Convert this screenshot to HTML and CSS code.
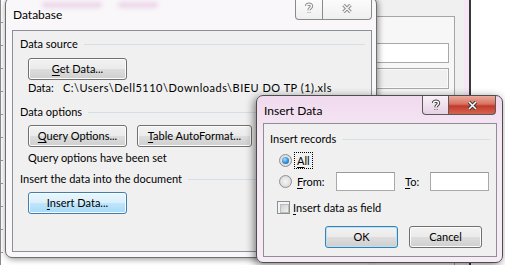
FILE: index.html
```html
<!DOCTYPE html>
<html lang="en">
<head>
    <meta charset="UTF-8">
    <title>Database - Insert Data</title>
    <link rel="stylesheet" href="styles.css">
</head>
<body>
    <div class="ruler"></div>

    <div class="backwin">
        <div class="back-panel">
            <div class="back-field"></div>
            <div class="back-field back-field-grey"></div>
        </div>
        <div class="back-gap"></div>
        <div class="back-pink"></div>
    </div>

    <div class="window db-win">
        <div class="glass glass-a"></div>
        <div class="glass glass-b"></div>
        <div class="titlebar">
            <span class="title">Database</span>
            <div class="caption">
                <span class="cap-btn cap-help">
                    <svg width="10" height="13" viewBox="0 0 10 13">
                        <path class="g-out" d="M2.5 4C2.5 1.6 7.5 1.6 7.5 4C7.5 6 5 6 5 8.2M5 10.2V11"/>
                        <path class="g-in" d="M2.5 4C2.5 1.6 7.5 1.6 7.5 4C7.5 6 5 6 5 8.2M5 10.2V11"/>
                    </svg>
                </span>
                <span class="cap-btn cap-close">
                    <svg width="12" height="11" viewBox="0 0 12 11">
                        <path class="g-out" d="M2.5 2L9.5 9M9.5 2L2.5 9"/>
                        <path class="g-in" d="M2.5 2L9.5 9M9.5 2L2.5 9"/>
                    </svg>
                </span>
            </div>
        </div>
        <div class="client db-client">
            <div class="group-head">Data source</div>
            <button class="btn btn-wide btn-first"><u>G</u>et Data...</button>
            <div class="info"><span class="info-key">Data:</span><span class="path">C:\Users\Dell5110\Downloads\BIEU DO TP (1).xls</span></div>
            <div class="group-head group-gap">Data options</div>
            <div class="btn-row">
                <button class="btn btn-wide"><u>Q</u>uery Options...</button>
                <button class="btn btn-table"><u>T</u>able AutoFormat...</button>
            </div>
            <div class="info info-tight">Query options have been set</div>
            <div class="group-head group-small">Insert the data into the document</div>
            <button class="btn btn-wide btn-hot btn-last"><u>I</u>nsert Data...</button>
        </div>
    </div>

    <div class="window ins-win">
        <div class="titlebar">
            <span class="title">Insert Data</span>
            <div class="caption">
                <span class="cap-btn cap-help">
                    <svg width="10" height="13" viewBox="0 0 10 13">
                        <path class="g-out" d="M2.5 4C2.5 1.6 7.5 1.6 7.5 4C7.5 6 5 6 5 8.2M5 10.2V11"/>
                        <path class="g-in" d="M2.5 4C2.5 1.6 7.5 1.6 7.5 4C7.5 6 5 6 5 8.2M5 10.2V11"/>
                    </svg>
                </span>
                <span class="cap-btn cap-close">
                    <svg width="13" height="11" viewBox="0 0 13 11">
                        <path class="g-out" d="M3 2L10 9M10 2L3 9"/>
                        <path class="g-in" d="M3 2L10 9M10 2L3 9"/>
                    </svg>
                </span>
            </div>
        </div>
        <div class="client ins-client">
            <div class="group-head">Insert records</div>
            <div class="opt-row">
                <span class="radio on"></span>
                <span class="opt-label focus"><u>A</u>ll</span>
            </div>
            <div class="opt-row range-row">
                <span class="radio"></span>
                <span class="opt-label from-label"><u>F</u>rom:</span>
                <span class="tbox"></span>
                <span class="to-label"><u>T</u>o:</span>
                <span class="tbox"></span>
            </div>
            <div class="check-row">
                <span class="check"></span>
                <span><u>I</u>nsert data as field</span>
            </div>
            <div class="dlg-buttons">
                <button class="btn btn-dlg btn-default">OK</button>
                <button class="btn btn-dlg">Cancel</button>
            </div>
        </div>
    </div>
</body>
</html>
```

FILE: styles.css
```css
* {
    box-sizing: border-box;
}
body {
    margin: 0;
    width: 505px;
    height: 265px;
    position: relative;
    overflow: hidden;
    background: #fff;
    font-family: Lato, "Noto Sans", sans-serif;
    font-size: 11px;
    color: #000;
}
u {
    text-decoration-thickness: 1px;
    text-underline-offset: 2px;
}

/* window partly hidden on the left */
.ruler {
    position: absolute;
    left: 0;
    top: 0;
    width: 3px;
    height: 265px;
    border-left: 1px solid #8c8c8c;
    background: repeating-linear-gradient(#fff 0 22px, #9a9a9a 22px 23px);
}

/* window behind, on the right */
.backwin {
    position: absolute;
    left: 368px;
    top: 0;
    width: 103px;
    height: 265px;
    display: flex;
    background: #f0f0f0;
    border-right: 2px solid #3a3a3a;
}
.back-panel {
    width: 87px;
    margin-top: 16px;
    padding-top: 26px;
    border-top: 1px solid #a5a5a5;
    border-right: 1px solid #a5a5a5;
    background: #f7f7f7;
    display: flex;
    flex-direction: column;
    gap: 5px;
}
.back-field {
    width: 81px;
    height: 20px;
    background: #fff;
    border: 1px solid #a8a8a8;
}
.back-field-grey {
    height: 21px;
    background: #efefef;
    box-shadow: inset 0 0 0 1px #fafafa;
}
.back-gap {
    flex: 1;
}
.back-pink {
    width: 5px;
    background: #f7e6f5;
}

/* dialog frames */
.window {
    position: absolute;
    display: flex;
    flex-direction: column;
    border: 1px solid #6f6f6f;
    border-radius: 7px;
}
.db-win {
    left: 5px;
    top: -3px;
    width: 372px;
    height: 261px;
    padding: 0 4px 5px 6px;
    background: #f9f7f9;
    box-shadow: 1px 1px 6px rgba(0, 0, 0, 0.45);
}
.ins-win {
    left: 256px;
    top: 95px;
    width: 247px;
    height: 168px;
    padding: 0 5px 5px 6px;
    border-color: #4d4d4d;
    background: linear-gradient(#f0d9ee, #f6e9f4 40px, #f7ecf5);
    box-shadow: -2px 2px 8px rgba(0, 0, 0, 0.5);
}
.glass {
    position: absolute;
    top: 4px;
    height: 6px;
    border-radius: 3px;
    background: #ecd6ea;
    filter: blur(2px);
}
.glass-a {
    left: 36px;
    width: 60px;
}
.glass-b {
    left: 112px;
    width: 40px;
}
.titlebar {
    height: 32px;
    display: flex;
    align-items: flex-start;
}
.ins-win .titlebar {
    height: 27px;
}
.title {
    align-self: center;
    padding-left: 1px;
    padding-top: 1px;
    font-size: 12px;
}
.caption {
    margin-left: auto;
    display: flex;
}
.cap-btn {
    display: flex;
    align-items: center;
    justify-content: center;
    border: 1px solid #8a8a8a;
    border-top: 0;
}
.cap-help {
    border-radius: 0 0 0 4px;
}
.cap-close {
    border-left: 0;
    border-radius: 0 0 4px 0;
}
.db-win .cap-btn {
    height: 22px;
    background: linear-gradient(rgba(255, 255, 255, 0.7), rgba(236, 236, 236, 0.7));
}
.db-win .cap-help {
    width: 28px;
}
.db-win .cap-close {
    width: 49px;
}
.ins-win .cap-btn {
    height: 19px;
    border-color: #5a5a5a;
}
.ins-win .cap-help {
    width: 27px;
    background: linear-gradient(#f9f0f8, #e6d2e4);
}
.ins-win .cap-close {
    width: 47px;
    margin-right: 1px;
    background: linear-gradient(#e9ab9e 0%, #d9715f 45%, #c4392b 55%, #d4654f 100%);
}
.g-out {
    fill: none;
    stroke: #8a8a8a;
    stroke-width: 3.4;
}
.g-in {
    fill: none;
    stroke: #f4f4f4;
    stroke-width: 1.5;
}
.ins-win .g-out {
    stroke: #3a3a3a;
}
.ins-win .g-in {
    stroke: #fff;
}

/* client areas */
.client {
    flex: 1;
    display: flex;
    flex-direction: column;
    align-items: flex-start;
    background: #f0f0f0;
    border: 1px solid #8e8f94;
}
.db-client {
    padding: 5px 6px 0 7px;
}
.ins-client {
    padding: 7px 6px 0 6px;
}
.group-head {
    align-self: stretch;
    display: flex;
    align-items: center;
    gap: 6px;
    line-height: 16px;
    white-space: nowrap;
}
.group-head::after {
    content: "";
    flex: 1;
    height: 1px;
    background: #d5dfe5;
}
.group-gap {
    margin-top: 8px;
}
.group-small {
    margin-top: 5px;
}
.info {
    margin-left: 8px;
    line-height: 16px;
    white-space: nowrap;
}
.info-key {
    display: inline-block;
    width: 35px;
}
.path {
    letter-spacing: 0.5px;
}
.info-tight {
    margin-top: 3px;
}

/* buttons */
.btn {
    height: 22px;
    padding: 0;
    font: inherit;
    color: #000;
    text-align: center;
    line-height: 18px;
    border: 1px solid #707070;
    border-radius: 3px;
    background: linear-gradient(#f2f2f2 0%, #ebebeb 48%, #dddddd 52%, #cfcfcf 100%);
    box-shadow: inset 0 0 0 1px #fcfcfc;
}
.btn-wide {
    width: 99px;
    margin-left: 8px;
}
.btn-first {
    margin-top: 6px;
}
.btn-last {
    margin-top: 5px;
}
.btn-row {
    display: flex;
    margin-top: 5px;
}
.btn-table {
    width: 115px;
    margin-left: 10px;
}
.btn-hot {
    border-color: #3c7fb1;
    background: linear-gradient(#eaf6fd 0%, #d9f0fc 48%, #bee6fd 52%, #a7d9f5 100%);
}
.btn-dlg {
    width: 73px;
}
.btn-default {
    border-color: #3c7fb1;
    box-shadow: inset 0 0 0 1px #b6e3f8;
}
.dlg-buttons {
    align-self: flex-end;
    display: flex;
    gap: 11px;
    margin-top: 11px;
    margin-right: 8px;
}

/* radio, check, text boxes */
.opt-row {
    display: flex;
    align-items: center;
    height: 16px;
    margin-top: 5px;
    margin-left: 9px;
}
.range-row {
    height: 20px;
    margin-top: 3px;
}
.radio {
    width: 13px;
    height: 13px;
    flex-shrink: 0;
    display: flex;
    align-items: center;
    justify-content: center;
    border: 1px solid #8e8f8f;
    border-radius: 50%;
    background: radial-gradient(circle at 50% 50%, #f6f6f6 0, #e2e2e2 55%, #c9c9c9 100%);
}
.radio.on::after {
    content: "";
    width: 7px;
    height: 7px;
    border-radius: 50%;
    background: radial-gradient(circle at 40% 35%, #a6dcfa 0, #2d8fd6 55%, #0b56a3 100%);
}
.opt-label {
    margin-left: 2px;
    padding: 0 2px;
    border: 1px solid transparent;
    line-height: 15px;
}
.focus {
    border: 1px dotted #000;
}
.from-label {
    width: 42px;
}
.tbox {
    width: 59px;
    height: 19px;
    background: #fff;
    border: 1px solid #a9a9a9;
    border-top-color: #999;
}
.to-label {
    width: 25px;
    margin-left: 10px;
}
.check-row {
    display: flex;
    align-items: center;
    gap: 3px;
    height: 16px;
    margin-top: 8px;
    margin-left: 7px;
}
.check {
    width: 13px;
    height: 13px;
    flex-shrink: 0;
    border: 1px solid #8e8f8f;
    background: #f4f4f4;
    padding: 2px;
}
.check::after {
    content: "";
    display: block;
    width: 7px;
    height: 7px;
    border: 1px solid #b9bcc0;
    background: linear-gradient(135deg, #cdd0d4, #f1f1f1);
}
```
